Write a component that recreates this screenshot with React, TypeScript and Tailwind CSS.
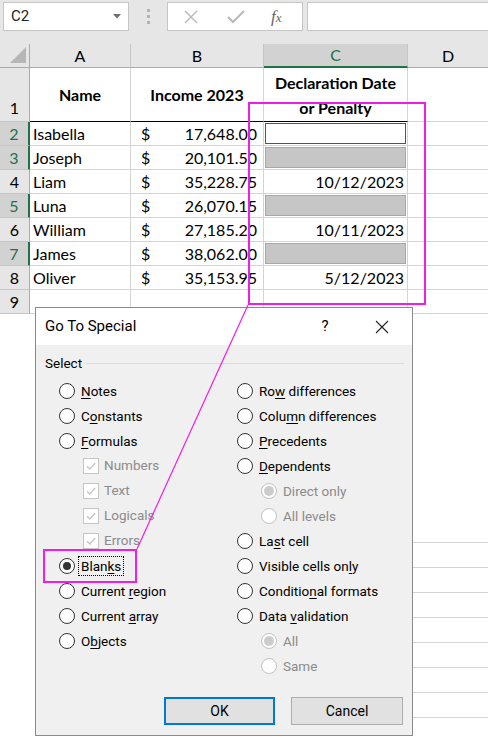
import React from 'react'

type Sel = 'active' | 'gray' | null

interface SheetRow {
  n: number
  name: string
  income: string
  date: string
  sel: Sel
}

const rows: SheetRow[] = [
  { n: 2, name: 'Isabella', income: '17,648.00', date: '', sel: 'active' },
  { n: 3, name: 'Joseph', income: '20,101.50', date: '', sel: 'gray' },
  { n: 4, name: 'Liam', income: '35,228.75', date: '10/12/2023', sel: null },
  { n: 5, name: 'Luna', income: '26,070.15', date: '', sel: 'gray' },
  { n: 6, name: 'William', income: '27,185.20', date: '10/11/2023', sel: null },
  { n: 7, name: 'James', income: '38,062.00', date: '', sel: 'gray' },
  { n: 8, name: 'Oliver', income: '35,153.95', date: '5/12/2023', sel: null },
]

// Underline the access key letter, like the Windows dialog does.
function Label({ text, k }: { text: string; k?: number }) {
  if (k == null) return <>{text}</>
  return (
    <>
      {text.slice(0, k)}
      <span className="underline underline-offset-[2px] decoration-[1px]">{text[k]}</span>
      {text.slice(k + 1)}
    </>
  )
}

function Radio({
  text,
  k,
  checked,
  disabled,
  focus,
  indent,
}: {
  text: string
  k?: number
  checked?: boolean
  disabled?: boolean
  focus?: boolean
  indent?: boolean
}) {
  return (
    <div className={`h-[25px] flex items-center ${indent ? 'pl-[24px]' : ''}`}>
      <span
        className={`w-4 h-4 shrink-0 rounded-full border bg-white flex items-center justify-center ${
          disabled ? 'border-[#c2c2c2]' : 'border-[#333]'
        }`}
      >
        {checked && (
          <span className={`rounded-full ${disabled ? 'w-[10px] h-[10px] bg-[#cccccc]' : 'w-2 h-2 bg-[#333]'}`} />
        )}
      </span>
      <span
        className={`ml-[4px] px-[2px] leading-[18px] ${disabled ? 'text-[#8b8b8b]' : 'text-black'} ${
          focus ? 'outline-1 outline-dotted outline-black' : ''
        }`}
      >
        <Label text={text} k={k} />
      </span>
    </div>
  )
}

function Check({ text }: { text: string }) {
  return (
    <div className="h-[25px] flex items-center pl-[24px]">
      <span className="w-4 h-4 shrink-0 border border-[#c6c6c6] bg-white flex items-center justify-center">
        <svg width="12" height="12" viewBox="0 0 12 12">
          <path d="M2 6.2 L4.8 9 L10.2 3" fill="none" stroke="#c6c6c6" strokeWidth="1.3" />
        </svg>
      </span>
      <span className="ml-[5px] text-[#8b8b8b]">{text}</span>
    </div>
  )
}

function GoToSpecial() {
  return (
    <div className="absolute left-[35px] top-[307px] w-[378px] h-[429px] border border-[#8a8a8a] bg-[#f0f0f0] flex flex-col font-['Roboto',sans-serif] text-[13.5px]">
      {/* Title bar */}
      <div className="h-[37px] bg-white flex items-center pl-[9px] text-[15px] text-black">
        <span className="flex-1">Go To Special</span>
        <span className="w-[20px] text-center mr-[40px]">?</span>
        <svg width="14" height="14" viewBox="0 0 14 14" className="mr-[23px]">
          <path d="M1 1 L13 13 M13 1 L1 13" stroke="#222" strokeWidth="1.1" />
        </svg>
      </div>

      {/* Select group */}
      <div className="flex items-center h-[20px] mt-[8px] pl-[9px] pr-[8px]">
        <span>Select</span>
        <span className="flex-1 h-px bg-[#dcdcdc] ml-[4px]" />
      </div>

      <div className="flex mt-[5px] pl-[23px]">
        <div className="w-[178px] flex flex-col">
          <Radio text="Notes" k={0} />
          <Radio text="Constants" k={1} />
          <Radio text="Formulas" k={0} />
          <Check text="Numbers" />
          <Check text="Text" />
          <Check text="Logicals" />
          <Check text="Errors" />
          <Radio text="Blanks" k={4} checked focus />
          <Radio text="Current region" k={8} />
          <Radio text="Current array" k={8} />
          <Radio text="Objects" k={1} />
        </div>
        <div className="flex flex-col">
          <Radio text="Row differences" k={2} />
          <Radio text="Column differences" k={4} />
          <Radio text="Precedents" k={0} />
          <Radio text="Dependents" k={0} />
          <Radio text="Direct only" checked disabled indent />
          <Radio text="All levels" disabled indent />
          <Radio text="Last cell" k={2} />
          <Radio text="Visible cells only" k={16} />
          <Radio text="Conditional formats" k={8} />
          <Radio text="Data validation" k={5} />
          <Radio text="All" checked disabled indent />
          <Radio text="Same" disabled indent />
        </div>
      </div>

      <div className="mt-auto mb-[10px] flex justify-end gap-[16px] pr-[9px] text-[14px]">
        <button className="w-[111px] h-[28px] bg-[#e1e1e1] border-2 border-[#0078d7] text-black">OK</button>
        <button className="w-[112px] h-[28px] bg-[#e1e1e1] border border-[#adadad] text-black">Cancel</button>
      </div>
    </div>
  )
}

function TopBar() {
  return (
    <div className="h-[44px] bg-[#e6e6e6] flex items-start pt-[2px] pl-[3px] font-['Roboto',sans-serif]">
      <div className="w-[126px] h-[29px] bg-white border border-[#c6c6c6] flex items-center pl-[7px] pr-[7px] text-[15px] text-[#222]">
        <span className="flex-1">C2</span>
        <svg width="8" height="5" viewBox="0 0 8 5">
          <path d="M0 0 L8 0 L4 4.5 Z" fill="#6e6e6e" />
        </svg>
      </div>
      <div className="w-[38px] h-[29px] flex flex-col items-center justify-center gap-[3px]">
        <span className="w-[3px] h-[3px] bg-[#b4b4b4]" />
        <span className="w-[3px] h-[3px] bg-[#b4b4b4]" />
        <span className="w-[3px] h-[3px] bg-[#b4b4b4]" />
      </div>
      <div className="w-[136px] h-[29px] bg-white border border-[#c6c6c6] flex items-center">
        <svg width="14" height="14" viewBox="0 0 14 14" className="ml-[16px]">
          <path d="M1 1 L13 13 M13 1 L1 13" stroke="#b8b8b8" strokeWidth="1.4" />
        </svg>
        <svg width="18" height="14" viewBox="0 0 18 14" className="ml-[29px]">
          <path d="M1 7 L6 12 L17 1" fill="none" stroke="#b8b8b8" strokeWidth="2" />
        </svg>
        <span className="ml-[26px] font-['Liberation_Serif',serif] italic text-[17px] text-[#666] leading-none">
          f<span className="text-[13px]">x</span>
        </span>
      </div>
      <div className="flex-1 h-[29px] ml-[4px] bg-white border border-[#c6c6c6] border-r-0" />
    </div>
  )
}

function ColHeaders() {
  return (
    <div className="h-[24px] flex bg-[#e6e6e6] text-[16px] text-black">
      <div className="w-[30px] h-full relative border-r border-[#ababab] border-b border-b-[#ababab]">
        <svg width="17" height="17" viewBox="0 0 17 17" className="absolute left-[10px] top-[3px]">
          <path d="M16 0 L16 16 L0 16 Z" fill="#b6b6b6" />
        </svg>
      </div>
      <div className="w-[101px] h-full flex items-center justify-center border-r border-[#c6c6c6] border-b border-b-[#ababab]">A</div>
      <div className="w-[133px] h-full flex items-center justify-center border-r border-[#c6c6c6] border-b border-b-[#ababab]">B</div>
      <div className="w-[144px] h-full flex items-center justify-center bg-[#d2d2d2] border-r border-[#c6c6c6] border-b-2 border-b-[#217346] text-[#217346]">
        C
      </div>
      <div className="w-[80px] h-full flex items-center justify-center border-b border-b-[#ababab]">D</div>
    </div>
  )
}

function RowHeader({ n, selected, tall }: { n: number; selected?: boolean; tall?: boolean }) {
  return (
    <div
      className={`w-[30px] h-full flex justify-center border-b border-[#c6c6c6] ${tall ? 'items-end pb-[1px]' : 'items-center'} ${
        selected ? 'bg-[#d2d2d2] text-[#217346] border-r-2 border-r-[#217346]' : 'bg-[#e6e6e6] text-black border-r border-r-[#ababab]'
      }`}
    >
      {n}
    </div>
  )
}

function DataRow({ r }: { r: SheetRow }) {
  return (
    <div className="h-[24px] flex">
      <RowHeader n={r.n} selected={r.sel !== null} />
      <div className="w-[101px] h-full flex items-center px-[3px] border-r border-b border-[#d4d4d4]">{r.name}</div>
      <div className="w-[133px] h-full flex items-center pl-[10px] pr-[6px] border-r border-b border-[#d4d4d4]">
        <span className="flex-1">$</span>
        <span>{r.income}</span>
      </div>
      <div className="w-[144px] h-full border-r border-b border-[#d4d4d4] flex">
        {r.sel === 'active' && <div className="flex-1 m-[1px] border border-[#217346] bg-white" />}
        {r.sel === 'gray' && <div className="flex-1 m-[1px] border border-[#a8a8a8] bg-[#c6c6c6]" />}
        {r.sel === null && <div className="flex-1 flex items-center justify-end pr-[3px]">{r.date}</div>}
      </div>
      <div className="w-[80px] h-full border-b border-[#d4d4d4]" />
    </div>
  )
}

export default function App() {
  return (
    <div className="relative w-[488px] h-[737px] bg-white overflow-hidden font-['Lato',sans-serif] text-[16px] text-black">
      <TopBar />
      <ColHeaders />

      {/* Row 1: wrapped headings */}
      <div className="h-[54px] flex">
        <RowHeader n={1} tall />
        <div className="w-[101px] h-full flex items-center justify-center font-bold border-r border-r-[#d4d4d4] border-b border-b-black">
          Name
        </div>
        <div className="w-[133px] h-full flex items-center justify-center font-bold border-r border-r-[#d4d4d4] border-b border-b-black">
          Income 2023
        </div>
        <div className="w-[144px] h-full flex items-center justify-center text-center font-bold leading-[25px] border-r border-r-[#d4d4d4] border-b border-b-black">
          Declaration Date
          <br />
          or Penalty
        </div>
        <div className="w-[80px] h-full border-b border-[#d4d4d4]" />
      </div>

      {rows.map((r) => (
        <DataRow key={r.n} r={r} />
      ))}

      <div className="h-[24px] flex">
        <RowHeader n={9} />
        <div className="w-[101px] h-full border-r border-b border-[#d4d4d4]" />
        <div className="w-[133px] h-full border-r border-b border-[#d4d4d4]" />
        <div className="w-[144px] h-full border-r border-b border-[#d4d4d4]" />
        <div className="w-[80px] h-full border-b border-[#d4d4d4]" />
      </div>

      {/* grid showing to the right of the dialog */}
      <div className="ml-[412px] w-[76px] flex flex-col">
        <div className="h-[228px]" />
        {[0, 1, 2, 3, 4, 5, 6, 7].map((i) => (
          <div key={i} className="h-[25px] border-t border-[#d4d4d4]" />
        ))}
      </div>

      <GoToSpecial />

      {/* magenta callout */}
      <svg className="absolute inset-0 pointer-events-none" width="488" height="737" viewBox="0 0 488 737">
        <rect x="249" y="103" width="176" height="201" fill="none" stroke="#ee1ee6" strokeWidth="2" />
        <line x1="248" y1="305" x2="137" y2="549" stroke="#ee1ee6" strokeWidth="1.2" />
        <rect x="44" y="550" width="92" height="32" fill="none" stroke="#ee1ee6" strokeWidth="2" />
      </svg>
    </div>
  )
}
